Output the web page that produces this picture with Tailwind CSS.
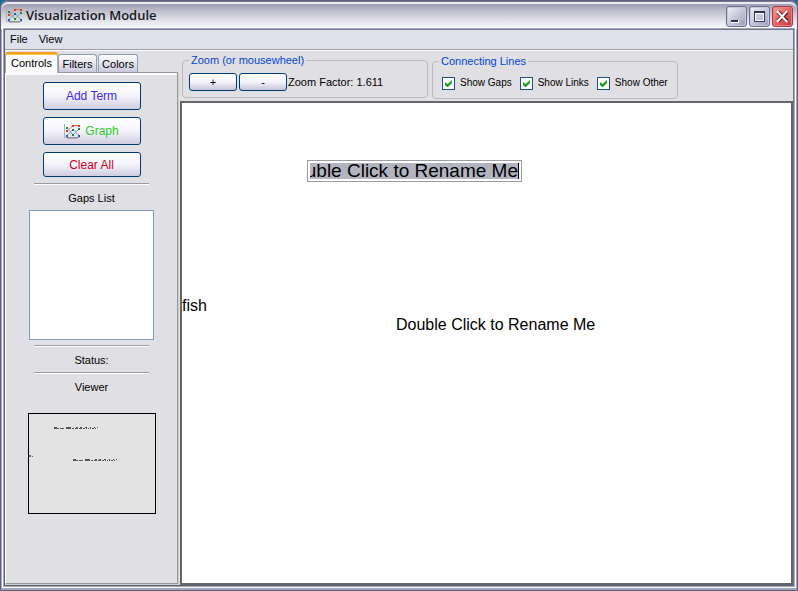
<!DOCTYPE html>
<html lang="en">
<head>
<meta charset="utf-8">
<title>Visualization Module</title>
<script src="https://cdn.jsdelivr.net/npm/@tailwindcss/browser@4"></script>
</head>
<body class="h-screen overflow-hidden bg-[#1f6c96] font-['Liberation_Sans',Arial,sans-serif] text-[11px] leading-4 text-black">
<svg class="hidden" aria-hidden="true">
  <symbol id="chart" viewBox="0 0 17 15">
    <path d="M.5 0v13.500H16" fill="none" stroke="#a9b0b8"/>
    <path d="M3 14h11" stroke="#777d82" stroke-width="1"/>
    <path d="M3 7L9 1.500H15" fill="none" stroke="#ef6a58"/>
    <path d="M3 4L9 11L15 5" fill="none" stroke="#6fae88"/>
    <path d="M3 11.500L9 5.500L15 11.500" fill="none" stroke="#6f9fd0"/>
    <path d="M2 6h2v2H2zM8 1h2v2H8zM14 1h2v2h-2z" fill="#e23a26"/>
    <path d="M2 3h2v2H2zM8 10h2v2H8zM14 4h2v2h-2z" fill="#138a3c"/>
    <path d="M2 11h2v2H2zM8 5h2v2H8zM14 11h2v2h-2z" fill="#1f62b0"/>
  </symbol>
</svg>
<div class="flex h-full flex-col rounded-t-lg border border-[#62607f] bg-[#a5a4bd]">
  <header class="flex h-7 shrink-0 items-center rounded-t-[7px] bg-linear-to-b from-[#8f8fa8] via-[#c4c4d2] via-40% to-white pr-1 pl-[5px] shadow-[inset_0_1px_0_#77758f,inset_0_3px_0_#e9e9f1]">
    <svg class="h-[15px] w-[17px]" aria-hidden="true"><use href="#chart"/></svg>
    <h1 class="ml-[3px] flex-1 font-['Open_Sans','Noto_Sans',sans-serif] text-[13px] font-semibold text-[#17171d]">Visualization Module</h1>
    <div class="mt-0.5 flex gap-0.5">
      <button aria-label="Minimize" class="h-[21px] w-[21px] rounded-[3px] border border-[#6d6c8c] bg-linear-to-br from-[#f4f4fa] to-[#9c9bbb] shadow-[inset_0_0_0_1px_#c9c9dc]"><svg class="block h-[19px] w-[19px]"><path d="M4 13h8v3H4z" fill="#fff"/><path d="M4 13h7v2H4z" fill="#35334f"/></svg></button>
      <button aria-label="Maximize" class="h-[21px] w-[21px] rounded-[3px] border border-[#6d6c8c] bg-linear-to-br from-[#f4f4fa] to-[#9c9bbb] shadow-[inset_0_0_0_1px_#c9c9dc]"><svg class="block h-[19px] w-[19px]"><path d="M4.500 5.500h10v9h-10z" fill="none" stroke="#35334f"/><path d="M4 4h11v2H4z" fill="#35334f"/><path d="M5.500 6.500h8v7h-8z" fill="none" stroke="#fff"/></svg></button>
      <button aria-label="Close" class="h-[21px] w-[21px] rounded-[3px] border border-[#b03545] bg-linear-to-br from-[#f3a09c] via-[#e2605e] to-[#b93a44] shadow-[inset_0_0_0_1px_#e58482]"><svg class="block h-[19px] w-[19px]"><path d="M5 5l9 9M14 5l-9 9" stroke="#6c1c28" stroke-width="4"/><path d="M4 4l10 11M14 4L4 15" stroke="#fff" stroke-width="2"/></svg></button>
    </div>
  </header>
  <div class="mr-[3px] mb-1 ml-[3px] flex min-h-0 flex-1 flex-col border border-t-[#77758f] border-r-[#77758f] border-b-[#62607f] border-l-[#62607f] bg-[#e0dfe3] shadow-[0_0_0_1px_#a5a4bd,0_0_0_2px_#fff]">
    <nav class="flex h-5 shrink-0 items-center gap-[11px] border-b border-[#9d9da1] bg-[#dee1e9] pb-px pl-[5px] shadow-[0_1px_0_#fff]">
      <button>File</button><button>View</button>
    </nav>
    <div class="flex min-h-0 flex-1 pt-0.5">
      <aside class="flex w-[173px] shrink-0 flex-col pb-px">
        <div role="tablist" class="flex h-5 items-end">
          <button role="tab" aria-selected="true" class="relative z-10 h-[21px] w-[53px] translate-y-px rounded-t-[3px] border border-t-2 border-b-0 border-[#a5aebb] border-t-[#f0a01c] bg-[#fbfbfc] pb-0.5 shadow-[inset_0_1px_0_#ffc73c]">Controls</button>
          <button role="tab" class="h-[18px] w-[39px] rounded-t-[3px] border border-b-0 border-[#91a0ae] bg-linear-to-b from-white to-[#c9c9dc]">Filters</button>
          <button role="tab" class="ml-px h-[18px] w-10 rounded-t-[3px] border border-b-0 border-[#91a0ae] bg-linear-to-b from-white to-[#c9c9dc]">Colors</button>
        </div>
        <div class="flex flex-1 flex-col items-center border border-[#919b9c] border-l-white pt-[9px] shadow-[inset_0_2px_0_#fcfcfe,1px_1px_0_#d0d0bf]">
          <button class="h-7 w-[98px] rounded-[3px] border border-[#003c74] bg-linear-to-b from-white via-[#f4f3fb] to-[#cfcde0] text-[12px] text-[#3a28f0]">Add Term</button>
          <button class="mt-[7px] flex h-7 w-[98px] items-center justify-center gap-1 rounded-[3px] border border-[#003c74] bg-linear-to-b from-white via-[#f4f3fb] to-[#cfcde0] text-[12px] text-[#2dcc1c]"><svg class="h-[15px] w-[17px]" aria-hidden="true"><use href="#chart"/></svg>Graph</button>
          <button class="mt-[7px] h-[25px] w-[98px] rounded-[3px] border border-[#003c74] bg-linear-to-b from-white via-[#f4f3fb] to-[#cfcde0] text-[12px] text-[#d00020]">Clear All</button>
          <hr class="mt-1.5 h-0.5 w-[115px] border-t border-b border-t-[#9d9da1] border-b-white">
          <h2 class="mt-[5px]">Gaps List</h2>
          <div role="listbox" aria-label="Gaps List" class="mt-1 h-[130px] w-[125px] border border-[#7f9db9] bg-white"></div>
          <hr class="mt-[5px] h-0.5 w-[115px] border-t border-b border-t-[#9d9da1] border-b-white">
          <p class="mt-[5px]">Status:</p>
          <hr class="mt-1 h-0.5 w-[115px] border-t border-b border-t-[#9d9da1] border-b-white">
          <h2 class="mt-[5px]">Viewer</h2>
          <svg class="mt-[18px] h-[101px] w-32 border border-black bg-[#e3e3e3]" role="img" aria-label="Viewer">
            <g id="mini" fill="none" stroke="#555" stroke-width="1">
              <path d="M25 13.500h3m9 0h5m5 0h2m2 0h2m3 0h2m3 0h1m3 0h1m2 0h1"/>
              <path d="M25 14.500h5m1 0h4m2 0h5m1 0h2m1 0h3m1 0h3m1 0h2m1 0h1m1 0h1m1 0h1m1 0h2m1 0h1"/>
            </g>
            <use href="#mini" x="19" y="32"/>
            <path d="M0 41.500h2M0 42.500h2m1 0h1" stroke="#666"/>
          </svg>
        </div>
      </aside>
      <main class="ml-0.5 flex min-w-0 flex-1 flex-col">
        <div class="flex h-[49px] shrink-0 items-start gap-1 pl-0.5">
          <fieldset class="h-[46px] w-[246px] rounded-[4px] border border-[#bfb8bf] pl-1.5">
            <legend class="px-0.5 leading-4 text-[#0046d5]">Zoom (or mousewheel)</legend>
            <div class="flex items-center gap-0.5 pt-[5px]">
              <button aria-label="Zoom in" class="h-[18px] w-12 rounded-[3px] border border-[#003c74] bg-linear-to-b from-white via-[#f4f3fb] to-[#c6c4d8]">+</button>
              <button aria-label="Zoom out" class="h-[18px] w-12 rounded-[3px] border border-[#003c74] bg-linear-to-b from-white via-[#f4f3fb] to-[#c6c4d8]">-</button>
              <span class="-ml-px">Zoom Factor: 1.611</span>
            </div>
          </fieldset>
          <fieldset class="mt-px h-[46px] w-[246px] rounded-[4px] border border-[#bfb8bf] pl-[9px]">
            <legend class="-ml-[3px] px-0.5 leading-4 text-[#0046d5]">Connecting Lines</legend>
            <div class="flex gap-2 pt-1.5 text-[10px]">
              <label class="flex items-center gap-[5px]"><span class="grid"><input type="checkbox" checked class="col-start-1 row-start-1 h-[13px] w-[13px] appearance-none border border-[#1c5180] bg-white"><svg class="pointer-events-none col-start-1 row-start-1 h-[13px] w-[13px]"><path d="M3 5v3l2 2h1l4-4V3L5.500 7z" fill="#21a121"/></svg></span>Show Gaps</label>
              <label class="flex items-center gap-[5px]"><span class="grid"><input type="checkbox" checked class="col-start-1 row-start-1 h-[13px] w-[13px] appearance-none border border-[#1c5180] bg-white"><svg class="pointer-events-none col-start-1 row-start-1 h-[13px] w-[13px]"><path d="M3 5v3l2 2h1l4-4V3L5.500 7z" fill="#21a121"/></svg></span>Show Links</label>
              <label class="flex items-center gap-[5px]"><span class="grid"><input type="checkbox" checked class="col-start-1 row-start-1 h-[13px] w-[13px] appearance-none border border-[#1c5180] bg-white"><svg class="pointer-events-none col-start-1 row-start-1 h-[13px] w-[13px]"><path d="M3 5v3l2 2h1l4-4V3L5.500 7z" fill="#21a121"/></svg></span>Show Other</label>
            </div>
          </fieldset>
        </div>
        <section aria-label="Graph canvas" class="relative flex-1 overflow-hidden border-2 border-[#666] bg-white text-[16px] leading-5">
          <div class="absolute top-[57px] left-[125px] h-[22px] w-[215px] border border-[#9d9da1] bg-white p-0.5">
            <input dir="rtl" aria-label="Term name" value="Double Click to Rename Me" class="block h-full w-full border-r border-black bg-[#b2b4bf] text-[19px] leading-4 outline-none">
          </div>
          <span class="absolute top-[193px] left-0">fish</span>
          <span class="absolute top-[212px] left-[214px] whitespace-nowrap">Double Click to Rename Me</span>
        </section>
      </main>
    </div>
  </div>
</div>
</body>
</html>
